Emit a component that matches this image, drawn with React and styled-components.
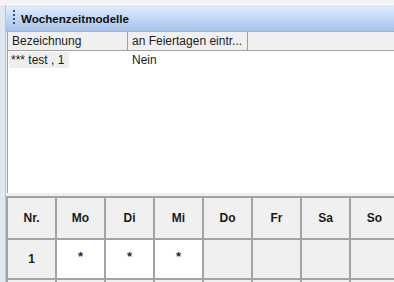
import React from "react";
import styled, { createGlobalStyle } from "styled-components";

const Global = createGlobalStyle`
  html, body { margin: 0; padding: 0; background: #f3f3f3; }
  body { font-family: "Liberation Sans", Arial, sans-serif; }
`;

const Page = styled.div`
  width: 394px;
  height: 282px;
  overflow: hidden;
  display: flex;
  flex-direction: column;
  background: #f3f3f3;
`;

const TopGap = styled.div`
  flex: none;
  height: 4px;
  border-bottom: 1px solid #fbfbfb;
`;

const Body = styled.div`
  flex: 1;
  display: flex;
  min-height: 0;
`;

const SideStrip = styled.div`
  flex: none;
  width: 5px;
  background: #dfe7f3;
  border-right: 1px solid #b8c6da;
`;

const Content = styled.div`
  flex: 1;
  display: flex;
  flex-direction: column;
  min-width: 0;
  & > * { flex-shrink: 0; }
`;

const TitleBar = styled.div`
  height: 26px;
  display: flex;
  align-items: center;
  gap: 6px;
  padding-left: 7px;
  background: linear-gradient(#e3edfa, #c6daf4 45%, #a6c3eb);
  border-bottom: 1px solid #9fb4d2;
`;

const Grip = styled.span`
  width: 2px;
  height: 16px;
  background: repeating-linear-gradient(to bottom, #3c5273 0 2px, transparent 2px 4px);
`;

const Title = styled.span`
  font-size: 11.6px;
  font-weight: bold;
  color: #101010;
`;

const List = styled.div`
  height: 161px;
  margin-left: 1px;
  background: #fff;
  border-left: 1px solid #a0a0a0;
  display: flex;
  flex-direction: column;
`;

const HeaderRow = styled.div`
  display: flex;
  height: 18px;
  background: #f0f0f0;
  border-bottom: 1px solid #a0a0a0;
`;

const HeaderCell = styled.div`
  width: ${(p) => p.$w}px;
  flex: ${(p) => (p.$w ? "none" : 1)};
  padding-left: 4px;
  display: flex;
  align-items: center;
  font-size: 12px;
  color: #202020;
  border-right: ${(p) => (p.$w ? "1px solid #a0a0a0" : "none")};
  white-space: nowrap;
  overflow: hidden;
`;

const DataRow = styled.div`
  display: flex;
  height: 17px;
  align-items: center;
  font-size: 12px;
  color: #1a1a1a;
`;

const DataCell = styled.div`
  width: ${(p) => p.$w}px;
  padding-left: 4px;
  box-sizing: border-box;
`;

const Selected = styled.span`
  background: #eeeeee;
  padding: 1px 5px 1px 2px;
  margin-left: -3px;
`;

const Divider = styled.div`
  height: 3px;
  background: #f0f0f0;
`;

const Grid = styled.div`
  display: grid;
  grid-template-columns: repeat(8, 47px);
  grid-template-rows: 40px 38px 40px;
  gap: 2px;
  padding: 2px 0 0 2px;
  background: #a3a3a3;
  width: max-content;
`;

const Cell = styled.div`
  background: ${(p) => (p.$white ? "#ffffff" : "#f0f0f0")};
  display: flex;
  align-items: center;
  justify-content: center;
  font-size: 12px;
  font-weight: 600;
  font-family: "Liberation Sans", Arial, sans-serif;
  color: #1a1a1a;
`;

const Star = styled.span`
  font-size: 13px;
  font-weight: bold;
  color: #1d2a44;
  margin-top: -6px;
`;

const days = ["Mo", "Di", "Mi", "Do", "Fr", "Sa", "So"];
const marked = [true, true, true, false, false, false, false];

export default function App() {
  return (
    <>
      <Global />
      <Page>
        <TopGap />
        <Body>
          <SideStrip />
          <Content>
            <TitleBar>
              <Grip />
              <Title>Wochenzeitmodelle</Title>
            </TitleBar>
            <List>
              <HeaderRow>
                <HeaderCell $w={115}>Bezeichnung</HeaderCell>
                <HeaderCell $w={115}>an Feiertagen eintr...</HeaderCell>
                <HeaderCell />
              </HeaderRow>
              <DataRow>
                <DataCell $w={120}>
                  <Selected>*** test , 1</Selected>
                </DataCell>
                <DataCell $w={120}>Nein</DataCell>
              </DataRow>
            </List>
            <Divider />
            <Grid>
              <Cell>Nr.</Cell>
              {days.map((d) => (
                <Cell key={d}>{d}</Cell>
              ))}
              <Cell>1</Cell>
              {marked.map((m, i) => (
                <Cell key={i} $white={m}>
                  {m && <Star>*</Star>}
                </Cell>
              ))}
              {Array.from({ length: 8 }).map((_, i) => (
                <Cell key={"r" + i} />
              ))}
            </Grid>
          </Content>
        </Body>
      </Page>
    </>
  );
}
